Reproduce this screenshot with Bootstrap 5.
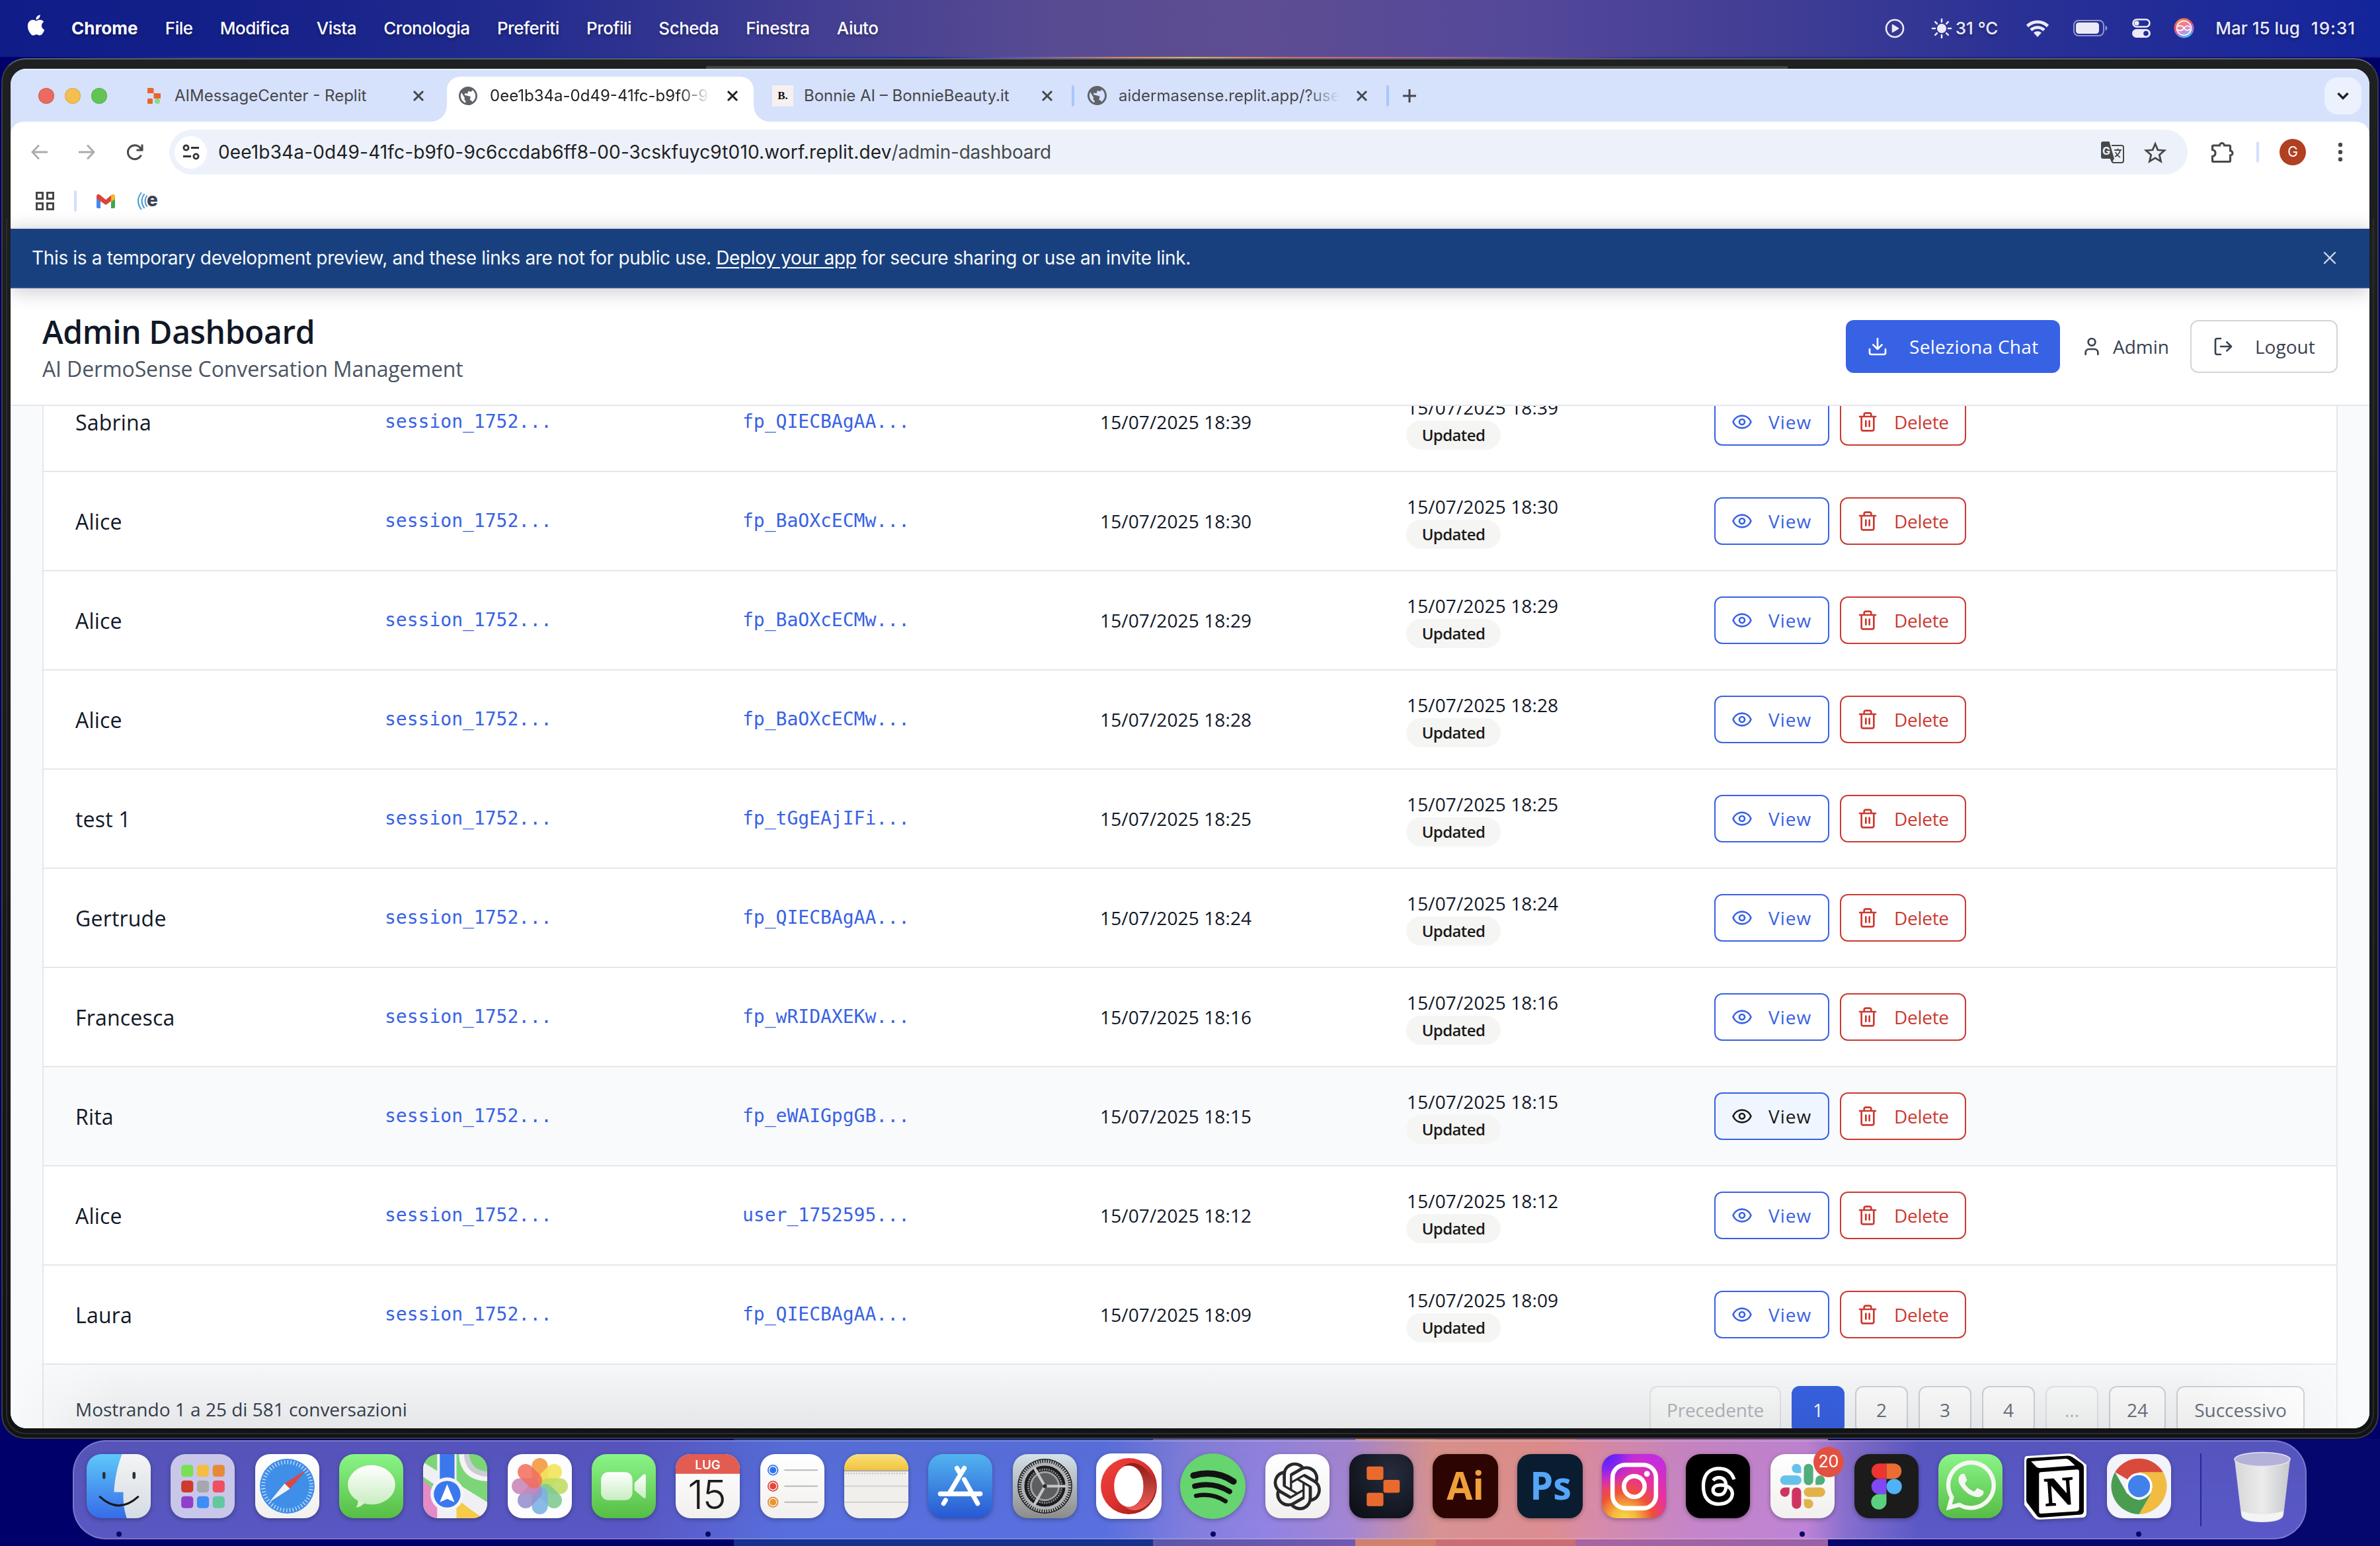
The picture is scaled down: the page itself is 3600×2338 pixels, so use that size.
<!DOCTYPE html>
<html lang="it">
<head>
<meta charset="utf-8">
<title>Admin Dashboard</title>
<link href="https://cdn.jsdelivr.net/npm/bootstrap@5.3.0/dist/css/bootstrap.min.css" rel="stylesheet">
<style>
:root{--ui:"Inter",sans-serif;--app:"Open Sans","Noto Sans",sans-serif;--line:#e5e7eb;--blue:#3862e4;--red:#cb3a31}
body{width:3600px;height:2338px;overflow:hidden;font-family:var(--ui);background:#00006a}
svg{display:block;flex:none;overflow:visible}
.st{fill:none;stroke:currentColor;stroke-width:2;stroke-linecap:round;stroke-linejoin:round}
/* menu bar */
.menubar{height:86px;padding:0 37px 11px 39px;color:#fff;font-size:26px;font-weight:500;letter-spacing:-.5px;text-shadow:0 3px 5px rgba(0,0,0,.3);background:linear-gradient(90deg,#101c88 0,#142089 350px,#232c8e 800px,#443f92 1250px,#584b92 1600px,#5e4d92 1900px,#54489a 2300px,#403d94 2700px,#2a3195 3050px,#18279a 3500px,#13259a 100%)}
.menubar .items{gap:41.3px;margin-left:38px;padding-top:10px}
.menubar .status{padding-top:10px;color:#eceaf6;letter-spacing:0}
.wallline{height:2px;background:linear-gradient(90deg,#00006a 0,#12309a 300px,#14309a 1400px,#6a58b4 1550px,#d68b5c 1700px,#d8b468 1800px,#cf6d6e 1950px,#a060a0 2200px,#2a2c90 2500px,#10107a 100%)}
/* window frame */
.frame{height:2088px;margin:0 2px;padding:14px 12px 14px;border:2px solid #3a3c3e;border-top-color:#5c6062;border-radius:36px;background:linear-gradient(#1e2022,#191a1b 50%,#121314);position:relative}
.frame .ledge{position:absolute;left:1064px;top:10px;width:1636px;height:6px;background:#444648}
.frame .rim{position:absolute;inset:240px 5px 5px 5px;border:2px solid #2a2b2c;border-top:0;border-radius:0 0 30px 30px}
.win{height:2056px;border-radius:24px;overflow:hidden;background:#fff;position:relative}
.strip{height:80px;background:#d6e1fc;border-top:2px solid #e8eefd;font-size:24px;color:#45474a}
.strip>*{transform:translateY(0)}
.lights{padding-left:42px;gap:16px;width:180px}
.lights i{width:24px;height:24px;border-radius:50%;border:1px solid rgba(0,0,0,.12)}
.tb{height:68px;margin-top:10px;padding-bottom:11px}
.tb .ttl{flex:1;white-space:nowrap;overflow:hidden}
.tb.on{background:#fff;border-radius:20px 20px 0 0;color:#1f2023;position:relative}
.tb.on:before,.tb.on:after{content:"";position:absolute;bottom:0;width:24px;height:24px}
.tb.on:before{left:-24px;background:radial-gradient(circle at 0 0,transparent 23.5px,#fff 24px)}
.tb.on:after{right:-24px;background:radial-gradient(circle at 100% 0,transparent 23.5px,#fff 24px)}
.fade-r{-webkit-mask-image:linear-gradient(90deg,#000 86%,transparent)}
.bonnie{width:32px;height:32px;background:#f6f1ef;margin-right:16px;font:700 17px "Liberation Serif",serif;color:#111}
.vsep{width:4px;height:32px;border-radius:2px;background:#a8c7fa;flex:none}
.vsep.pale{background:#d3e0fd}
.chev{width:56px;height:56px;border-radius:20px;background:#ebf2fd;color:#1f2023;margin-right:12px}
.tools{height:92px;background:#fff;border-radius:20px 20px 0 0;color:#47484a}
.under{background:#d6e1fc}
.omni{width:3053px;height:68px;border-radius:34px;background:#edf2fa;font-size:28px;padding:0 32px 0 8px;color:#1f2023}
.omni .site{width:49px;height:49px;border-radius:50%;background:#fff;margin-right:17px}
.marks{height:68px;padding:0 0 0 37px}
.marks>div{height:56px}
.ava{width:40px;height:40px;border-radius:50%;background:#b04020;color:#fff;font-size:21px}
/* preview banner */
.notice{height:92px;padding:0 51px 0 32px;background:#19407e;border-top:2px solid #dfe3e3;border-bottom:2px solid #2d5191;color:#f5f9fc;font-size:28px;letter-spacing:-.34px;box-shadow:0 4px 28px rgba(0,0,0,.22);position:relative;z-index:3}
.notice u{text-underline-offset:4px;color:#fff}
/* app */
.apphead{height:178px;padding:3px 48px 0;border-bottom:2px solid var(--line);background:#fff;font-family:var(--app);position:relative;z-index:2}
.apphead h1{font-size:48px;font-weight:650;line-height:64px;margin:0;color:#111827;letter-spacing:-.4px}
.apphead p{font-size:32px;line-height:48px;margin:0;color:#4b5563;letter-spacing:-.12px}
.apphead .acts{margin-top:-3px}
.bt{display:inline-flex;align-items:center;font-size:28px;border-radius:12px;white-space:nowrap;line-height:1}
.bt-lg{height:80px;padding:0 32px;gap:32px;font-size:28px}
.bt-sm{height:72px;padding:0 24px;gap:24px;border:2px solid;background:#fff}
.bt-view{color:var(--blue);width:174px;letter-spacing:1px}
.bt-del{color:var(--red);width:191px;border-color:var(--red);letter-spacing:-.3px}
.bt-view.hot{background:#eff6ff;color:#1a1a1a;border-color:var(--blue)}
.scroll{height:1546px;padding:0 48px;background:#f9fafb;overflow:hidden;font-family:var(--app)}
.sheet{margin-top:-50px;border:solid var(--line);border-width:0 2px;background:#fff}
.sheet table{table-layout:fixed;width:100%;margin:0;border-collapse:separate;border-spacing:0}
.sheet td{height:150px;padding:0 0 0 48px;border-bottom:2px solid var(--line);vertical-align:middle;font-size:28px;line-height:40px;letter-spacing:.12px;color:#111827}
.sheet td:nth-child(4),.sheet td:nth-child(5){padding-left:47px}
.sheet tr.hov td{background:#f9fafb}
.sheet td.who{font-size:32px;padding-top:1px;letter-spacing:.2px;font-weight:450}
.sheet td.mono{font-family:"DejaVu Sans Mono",monospace;color:var(--blue);letter-spacing:0;padding-left:47px}
.upd{display:flex;align-items:center;justify-content:center;width:143px;height:44px;border-radius:22px;background:#f5f5f4;color:#1c1917;font-size:24px;font-weight:600;margin-left:-1px;letter-spacing:-.6px}
.foot{height:140px;padding:32px 48px;background:#f9fafb;font-size:28px;color:#374151}
.foot .pg{height:72px;min-width:80px;padding:0 25px;justify-content:center;border:2px solid #d1d5db;background:#fff;color:#6b7280;line-height:1}
.foot .pg.off{border-color:#e5e7ea;background:#fcfdfc;color:#b4b8bd}
.foot .pg.cur{background:#3862e4;border-color:#3862e4;color:#fff}
.shade{position:absolute;left:0;right:0;bottom:0;height:110px;z-index:4;pointer-events:none;background:linear-gradient(transparent,rgba(20,25,30,.085));-webkit-mask-image:linear-gradient(90deg,transparent,#000 160px,#000 3300px,transparent 3540px)}
/* dock */
.desk{height:162px;padding-top:2px;background:linear-gradient(90deg,#00006a 0 1110px,#16308e 1110px 1744px,#5c57a8 1744px,#7159b2 2050px,#d0806c 2050px 2172px,#cb6d74 2172px 2383px,#a864a2 2383px,#9862a8 2765px,#05066e 2765px)}
.dock{width:3379px;height:150px;margin-left:110px;padding:19px 0 0 4px;border-radius:50px;border:2px solid rgba(255,255,255,.2);background:linear-gradient(rgba(0,0,30,.04),rgba(90,90,255,.06)),linear-gradient(90deg,#5957bd 0,#5957c2 850px,#5870dc 1080px,#5a71de 1560px,#8580dc 1690px,#9585e2 1800px,#a888d2 1930px,#df968c 2060px,#e5908c 2230px,#df8ea6 2300px,#cc88c6 2440px,#c486d4 2620px,#8a70cc 2680px,#5b59c4 2790px,#5958c4 100%)}
.app{width:127.33px;height:127px;position:relative}
.app svg{margin:0 auto;filter:drop-shadow(0 2px 3px rgba(0,0,0,.3))}
.run:after{content:"";position:absolute;left:59.5px;top:117px;width:8px;height:8px;border-radius:50%;background:#08086a}
.cnt{position:absolute;right:1px;top:-11px;width:46px;height:46px;border-radius:50%;background:#e25041;color:#fff;font-size:25px}
.split{width:2px;height:110px;margin:-1px 0 0 29px;background:#26289c}
</style>
<script src="https://cdn.jsdelivr.net/npm/bootstrap@5.3.0/dist/js/bootstrap.bundle.min.js"></script>
</head>
<body>
<svg width="0" height="0" class="position-absolute">
<defs>
<symbol id="x" viewBox="0 0 20 20"><path d="M3 3l14 14M17 3L3 17" fill="none" stroke="currentColor" stroke-width="3"/></symbol>
<symbol id="globe" viewBox="2 2 20 20"><path fill="currentColor" d="M12 2C6.48 2 2 6.48 2 12s4.48 10 10 10 10-4.48 10-10S17.52 2 12 2zm-1 17.93c-3.95-.49-7-3.85-7-7.93 0-.62.08-1.21.21-1.79L9 15v1c0 1.1.9 2 2 2v1.93zm6.9-2.54c-.26-.81-1-1.39-1.9-1.39h-1v-3c0-.55-.45-1-1-1H8v-2h2c.55 0 1-.45 1-1V7h2c1.1 0 2-.9 2-2v-.41c2.93 1.19 5 4.06 5 7.41 0 2.08-.8 3.97-2.1 5.39z" transform="rotate(14 12 12)"/></symbol>
<symbol id="eye" viewBox="0 0 24 24"><path d="M2.062 12.348a1 1 0 0 1 0-.696 10.75 10.75 0 0 1 19.876 0 1 1 0 0 1 0 .696 10.75 10.75 0 0 1-19.876 0"/><circle cx="12" cy="12" r="3"/></symbol>
<symbol id="trash" viewBox="0 0 24 24"><path d="M3 6h18M19 6v14a2 2 0 0 1-2 2H7a2 2 0 0 1-2-2V6M8 6V4a2 2 0 0 1 2-2h4a2 2 0 0 1 2 2v2M10 11v6M14 11v6"/></symbol>
<clipPath id="sq"><rect width="96" height="96" rx="22"/></clipPath>
<linearGradient id="gw" x2="0" y2="1"><stop stop-color="#fff"/><stop offset="1" stop-color="#f1f0ee"/></linearGradient>
<linearGradient id="gg" x2="0" y2="1"><stop stop-color="#8af588"/><stop offset="1" stop-color="#56bd45"/></linearGradient>
<linearGradient id="gb" x2="0" y2="1"><stop stop-color="#5ec8fa"/><stop offset="1" stop-color="#366be8"/></linearGradient>
<linearGradient id="gs" x2="0" y2="1"><stop stop-color="#52b4f0"/><stop offset="1" stop-color="#2857d2"/></linearGradient>
<linearGradient id="gf" x2="0" y2="1"><stop stop-color="#f4f4f4"/><stop offset="1" stop-color="#d4dce4"/></linearGradient>
<linearGradient id="gv" x2="0" y2="1"><stop stop-color="#fff"/><stop offset="1" stop-color="#c8edc0"/></linearGradient>
<linearGradient id="gset" x2="0" y2="1"><stop stop-color="#d4e2ea"/><stop offset="1" stop-color="#8c8c8a"/></linearGradient>
<linearGradient id="gop" x2="1" y2="1"><stop stop-color="#f2403c"/><stop offset=".5" stop-color="#dc322f"/><stop offset="1" stop-color="#8e1612"/></linearGradient>
<linearGradient id="gop2" x2="0" y2="1"><stop stop-color="#8c1c14"/><stop offset="1" stop-color="#f0605a"/></linearGradient>
<linearGradient id="gnote" x2="0" y2="1"><stop stop-color="#f8e07c"/><stop offset="1" stop-color="#f3c43c"/></linearGradient>
<radialGradient id="gig" cx=".35" cy="1.02" r="1.05"><stop stop-color="#f8d84a"/><stop offset=".18" stop-color="#f5b83c"/><stop offset=".42" stop-color="#ee5038"/><stop offset=".66" stop-color="#e830a0"/><stop offset="1" stop-color="#c42ce0"/></radialGradient>
<radialGradient id="gig2" cx=".05" cy="0" r=".55"><stop stop-color="#4a20ff"/><stop offset=".45" stop-color="#7a24f8" stop-opacity=".85"/><stop offset="1" stop-color="#c42ce0" stop-opacity="0"/></radialGradient>
<radialGradient id="grp" cx=".65" cy=".3" r=".8"><stop stop-color="#262c3e"/><stop offset="1" stop-color="#0e1118"/></radialGradient>
<linearGradient id="gt" x2="1"><stop stop-color="#d6d6d8"/><stop offset=".5" stop-color="#ececec"/><stop offset="1" stop-color="#c6c8cc"/></linearGradient>
<linearGradient id="gsi" x1=".2" x2=".6" y2="1"><stop stop-color="#f59a3a"/><stop offset=".35" stop-color="#ec5060"/><stop offset=".7" stop-color="#b070d0"/><stop offset="1" stop-color="#40c0f0"/></linearGradient>
</defs></svg>

<header class="menubar d-flex align-items-center">
<svg width="31" height="32" viewBox="0 0 16 16" fill="#fff"><path d="M11.182.008C11.148-.03 9.923.023 8.857 1.18c-1.066 1.156-.902 2.482-.878 2.516s1.52.087 2.475-1.258.762-2.391.728-2.43m3.314 11.733c-.048-.096-2.325-1.234-2.113-3.422s1.675-2.789 1.698-2.854-.597-.79-1.254-1.157a3.7 3.7 0 0 0-1.563-.434c-.108-.003-.483-.095-1.254.116-.508.139-1.653.589-1.968.607-.316.018-1.256-.522-2.267-.665-.647-.125-1.333.131-1.824.328-.49.196-1.422.754-2.074 2.237-.652 1.482-.311 3.83-.067 4.56s.625 1.924 1.273 2.796c.576.984 1.34 1.667 1.659 1.899s1.219.386 1.843.067c.502-.308 1.408-.485 1.766-.472.357.013 1.061.154 1.782.539.571.197 1.111.115 1.652-.105.541-.221 1.324-1.059 2.238-2.758q.52-1.185.473-1.282"/></svg>
<nav class="items d-flex">
<span class="fw-bold" style="letter-spacing:0">Chrome</span><span>File</span><span>Modifica</span><span>Vista</span><span>Cronologia</span><span>Preferiti</span><span>Profili</span><span>Scheda</span><span>Finestra</span><span>Aiuto</span>
</nav>
<div class="status d-flex align-items-center ms-auto">
<svg width="30" height="30" viewBox="0 0 30 30" style="margin-right:41px"><circle cx="15" cy="15" r="13" fill="none" stroke="currentColor" stroke-width="2.6"/><path d="M11.5 9.5v11l9-5.5z" fill="currentColor" stroke="currentColor" stroke-width="1.5" stroke-linejoin="round"/></svg>
<svg width="30" height="30" viewBox="0 0 30 30" style="margin-right:6px"><circle cx="15" cy="15" r="7" fill="currentColor"/><path d="M15 1v4M15 25v4M1 15h4M25 15h4M5.2 5.2l2.7 2.7M22.1 22.1l2.7 2.7M5.2 24.8l2.7-2.7M22.1 7.9l2.7-2.7" stroke="currentColor" stroke-width="2.6" stroke-linecap="round"/></svg>
<span style="margin-right:42px">31 °C</span>
<svg width="36" height="26" viewBox="0 0 36 26" style="margin-right:36px"><path d="M2.500 9.500a22 22 0 0 1 31 0M8 15.500a14.500 14.500 0 0 1 20 0" fill="none" stroke="currentColor" stroke-width="4.600"/><path d="M12 19.500a9 9 0 0 1 12 0L18 26z" fill="currentColor"/></svg>
<svg width="52" height="25" viewBox="0 0 52 25" style="margin-right:37px"><rect x="1" y="1" width="45" height="23" rx="7" fill="none" stroke="currentColor" stroke-opacity=".55" stroke-width="2"/><rect x="4" y="4" width="35" height="17" rx="4.500" fill="currentColor"/><path d="M48.500 8.500v8q3-1.500 3-4t-3-4" fill="currentColor" opacity=".55"/></svg>
<svg width="28" height="29" viewBox="0 0 28 29" style="margin-right:35px"><rect x="1.500" y="1.500" width="25" height="11" rx="5.500" fill="none" stroke="currentColor" stroke-width="2.600"/><circle cx="7" cy="7" r="3.600" fill="currentColor"/><rect y="16" width="28" height="13" rx="6.500" fill="currentColor"/><circle cx="21" cy="22.500" r="3.800" fill="#1f2c95"/></svg>
<svg width="31" height="31" viewBox="0 0 31 31" style="margin-right:32px"><circle cx="15.500" cy="15.500" r="15" fill="url(#gsi)"/><circle cx="15.500" cy="15.500" r="11" fill="rgba(255,255,255,.25)" stroke="#fff" stroke-width="1.600"/><path d="M6 13c5-3 8 0 10 3s5 4 9 1M6 18c5 3 8 0 10-3s5-4 9-1" fill="none" stroke="#fff" stroke-width="1.600"/></svg>
<span style="margin-right:17px">Mar 15 lug</span><span style="letter-spacing:1px">19:31</span>
</div>
</header>
<div class="wallline"></div>

<div class="frame">
<div class="ledge"></div><div class="rim"></div>
<div class="win d-flex flex-column">
<div class="strip d-flex align-items-center flex-shrink-0">
<div class="lights d-flex"><i style="background:#ec6a5e"></i><i style="background:#f4bf50"></i><i style="background:#61c554"></i></div>
<div class="tb d-flex align-items-center" style="width:480px;padding-left:26px;padding-right:33px">
<svg width="22" height="24" viewBox="0 0 22 24" style="margin-right:20px"><path d="M1 0h8a1.500 1.500 0 0 1 1.500 1.500V8H1zM10.500 8H20a1.500 1.500 0 0 1 1 1.500V15a1 1 0 0 1-1 1h-9.500z" fill="#e8662c"/><rect x="1" y="16" width="8" height="8" rx="1.500" fill="#e8662c"/><circle cx="16" cy="20" r="4" fill="#86dc80"/></svg>
<span class="ttl">AIMessageCenter - Replit</span><svg width="20" height="20"><use href="#x"/></svg></div>
<div class="tb on d-flex align-items-center" style="width:464px;padding-left:18px;padding-right:22px"><svg width="28" height="28" style="margin-right:19px;color:#5f6368"><use href="#globe"/></svg><span class="ttl fade-r" style="margin-right:24px">0ee1b34a-0d49-41fc-b9f0-9c6</span><svg width="20" height="20"><use href="#x"/></svg></div>
<div class="tb d-flex align-items-center" style="width:481px;padding-left:28px;padding-right:27px"><span class="bonnie d-flex align-items-center justify-content-center">B.</span><span class="ttl">Bonnie AI – BonnieBeauty.it</span><svg width="20" height="20"><use href="#x"/></svg></div>
<div class="vsep" style="margin-right:-1px"></div>
<div class="tb d-flex align-items-center" style="width:473px;padding-left:21px;padding-right:27px"><svg width="29" height="29" style="margin-right:18px;color:#5f6368"><use href="#globe"/></svg><span class="ttl fade-r" style="margin-right:25px">aidermasense.replit.app/?user</span><svg width="20" height="20"><use href="#x"/></svg></div>
<div class="vsep"></div>
<svg width="24" height="24" viewBox="0 0 24 24" style="margin-left:19px"><path d="M12 2v20M2 12h20" stroke="currentColor" stroke-width="3"/></svg>
<div class="chev d-flex align-items-center justify-content-center ms-auto"><svg width="20" height="12" viewBox="0 0 20 12"><path d="M2.500 2l7.500 7.500L17.500 2" fill="none" stroke="currentColor" stroke-width="3.400"/></svg></div>
</div>
<div class="under flex-shrink-0"><div class="tools d-flex align-items-center">
<svg width="26" height="24" viewBox="0 0 26 24" style="margin:0 45px 0 31px;color:#a9abae"><path d="M12 1.500L2 12l10 10.500M2 12h23" fill="none" stroke="currentColor" stroke-width="2.800"/></svg>
<svg width="26" height="24" viewBox="0 0 26 24" style="margin-right:47px;color:#a9abae"><path d="M14 1.500L24 12 14 22.500M24 12H1" fill="none" stroke="currentColor" stroke-width="2.800"/></svg>
<svg width="26" height="26" viewBox="0 0 26 26" style="margin-right:39px"><path d="M22.500 17.500A10.500 10.500 0 1 1 21 6.500L23.500 9M24 1.500v8.500h-8.500" fill="none" stroke="currentColor" stroke-width="3"/></svg>
<div class="omni d-flex align-items-center">
<span class="site d-flex align-items-center justify-content-center"><svg width="26" height="24" viewBox="0 0 26 24"><g fill="none" stroke="#333" stroke-width="2.800"><circle cx="5.500" cy="5.500" r="3.600"/><circle cx="20.500" cy="18.500" r="3.600"/><path d="M13 5.500h12M1 18.500h12"/></g></svg></span>
<span style="letter-spacing:.15px">0ee1b34a-0d49-41fc-b9f0-9c6ccdab6ff8-00-3cskfuyc9t010.worf.replit.dev</span><span style="color:#47494c;letter-spacing:-.22px">/admin-dashboard</span>
<svg class="ms-auto" width="35" height="33" viewBox="0 0 35 33" style="margin-right:30px;color:#47484a"><path d="M16 6h15a3 3 0 0 1 3 3v20a3 3 0 0 1-3 3H18l-3-6" fill="none" stroke="currentColor" stroke-width="2"/><path d="M3 0h9.500L20 26H3a3 3 0 0 1-3-3V3a3 3 0 0 1 3-3zM14 26h6l-4 6z" fill="currentColor"/><path d="M20 13h11M25.500 10.500V13M29 13c-1 5-4 8-8 10M22 16c1 3 4 6 7 8" fill="none" stroke="currentColor" stroke-width="1.800"/><text x="2" y="19.500" font-size="16" font-weight="700" fill="#edf2fa" font-family="Inter">G</text></svg>
<svg width="34" height="32" viewBox="0 0 34 32"><path d="M17 3.500l3.900 9.300 10 .9-7.600 6.600 2.300 9.800L17 24.900l-8.600 5.200 2.300-9.800-7.600-6.600 10-.9z" fill="none" stroke="#47484a" stroke-width="2.800"/></svg>
</div>
<svg width="36" height="34" viewBox="0 0 36 34" style="margin-left:35px"><path d="M4 7h9.500a3.500 3.500 0 0 1 7 0H28a1.500 1.500 0 0 1 1.500 1.500V15a3.500 3.500 0 0 1 0 7v8a1.500 1.500 0 0 1-1.500 1.500H4A1.500 1.500 0 0 1 2.500 30v-6.500c6-1 6-9 0-10V8.500A1.500 1.500 0 0 1 4 7z" fill="none" stroke="currentColor" stroke-width="3.200"/></svg>
<div class="vsep pale" style="margin:0 31px 0 33px"></div>
<div class="ava d-flex align-items-center justify-content-center">G</div>
<svg width="8" height="32" viewBox="0 0 8 32" style="margin-left:48px" fill="currentColor"><circle cx="4" cy="5" r="3.200"/><circle cx="4" cy="16" r="3.200"/><circle cx="4" cy="27" r="3.200"/></svg>
</div></div>
<div class="marks flex-shrink-0"><div class="d-flex align-items-center">
<svg width="30" height="28" viewBox="0 0 30 28"><g fill="none" stroke="#47484a" stroke-width="3"><rect x="2.500" y="1.500" width="9" height="9"/><rect x="18.500" y="1.500" width="9" height="9"/><rect x="2.500" y="17.500" width="9" height="9"/><rect x="18.500" y="17.500" width="9" height="9"/></g></svg>
<div class="vsep pale" style="margin:0 29px 0 29px"></div>
<svg width="30" height="23" viewBox="0 0 30 23" style="margin-right:32px"><path d="M1 4v16a2 2 0 0 0 2 2h4V9z" fill="#4a86f0"/><path d="M29 4v16a2 2 0 0 1-2 2h-4V9z" fill="#3fa652"/><path d="M1 4a3 3 0 0 1 5-2.500l9 7.500 9-7.500v9L15 17 1 7z" fill="#dc4437"/><path d="M24 1.500a3 3 0 0 1 5 2.500v4l-6 4V2.300z" fill="#f4b928"/></svg>
<svg width="33" height="28" viewBox="0 0 33 28"><path d="M7 1q-10 13 0 26M11.500 3q-8 11 0 22M15.500 5.500q-6 8.500 0 17" fill="none" stroke="#4a9ad4" stroke-width="2"/><text x="15" y="22" font-size="28" font-weight="800" fill="#3a4250" font-family="Inter">e</text></svg>
</div></div>

<div class="notice d-flex align-items-center justify-content-between flex-shrink-0"><span>This is a temporary development preview, and these links are not for public use. <u>Deploy your app</u> for secure sharing or use an invite link.</span>
<svg width="18" height="18" viewBox="0 0 18 18"><path d="M1 1l16 16M17 1L1 17" stroke="#cfd9e8" stroke-width="2.400" stroke-linecap="round"/></svg></div>

<div class="apphead d-flex align-items-center flex-shrink-0">
<div><h1>Admin Dashboard</h1><p>AI DermoSense Conversation Management</p></div>
<div class="acts d-flex align-items-center ms-auto">
<span class="bt bt-lg text-white" style="background:#3862e4;width:324px;letter-spacing:.3px"><svg class="st" width="32" height="32" viewBox="0 0 24 24"><path d="M21 15v4a2 2 0 0 1-2 2H5a2 2 0 0 1-2-2v-4M7 10l5 5 5-5M12 15V3"/></svg>Seleziona Chat</span>
<span class="bt" style="margin:0 32px;gap:16px;width:133px;color:#374151"><svg class="st" width="32" height="32" viewBox="0 0 24 24"><path d="M19 21v-2a4 4 0 0 0-4-4H9a4 4 0 0 0-4 4v2"/><circle cx="12" cy="7" r="4"/></svg>Admin</span>
<span class="bt bt-lg" style="border:2px solid #d1d5db;color:#374151;width:223px"><svg class="st" width="32" height="32" viewBox="0 0 24 24"><path d="M9 21H5a2 2 0 0 1-2-2V5a2 2 0 0 1 2-2h4M16 17l5-5-5-5M21 12H9"/></svg>Logout</span>
</div></div>

<div class="scroll flex-shrink-0"><div class="sheet">
<table><colgroup><col style="width:469px"><col style="width:541px"><col style="width:541px"><col style="width:464px"><col style="width:464px"><col></colgroup><tbody id="rows"></tbody></table>
<div class="foot d-flex justify-content-between">
<span style="line-height:70px">Mostrando 1 a 25 di 581 conversazioni</span>
<div class="d-flex" style="gap:16px"><span class="bt pg off" style="width:199px;letter-spacing:-.2px">Precedente</span><span class="bt pg cur">1</span><span class="bt pg">2</span><span class="bt pg">3</span><span class="bt pg">4</span><span class="bt pg off">...</span><span class="bt pg" style="width:86px">24</span><span class="bt pg" style="width:194px">Successivo</span></div>
</div></div></div>
<div class="shade"></div>
</div></div>

<footer class="desk"><div class="dock d-flex">
<div class="app run"><svg width="97" height="97" viewBox="0 0 96 96"><g clip-path="url(#sq)"><rect width="96" height="96" fill="url(#gb)"/><path d="M53 0C46 18 42 38 41 56q0 1 1 1h13q-1 22 5 39h36V0z" fill="url(#gf)"/></g><path d="M26 29v6M71 29v6" stroke="#26303a" stroke-width="4.500" stroke-linecap="round"/><path d="M20 64q28 26 57 0" fill="none" stroke="#15181c" stroke-width="3" stroke-linecap="round"/></svg></div>
<div class="app"><svg width="97" height="97" viewBox="0 0 96 96"><rect width="96" height="96" rx="22" fill="#c8c7ea"/><g><rect x="16" y="16" width="18" height="18" rx="4.500" fill="#78e052"/><rect x="39.500" y="16" width="18" height="18" rx="4.500" fill="#f5be42"/><rect x="63" y="16" width="18" height="18" rx="4.500" fill="#e78a38"/><rect x="16" y="39.500" width="18" height="18" rx="4.500" fill="#d03a2c"/><rect x="39.500" y="39.500" width="18" height="18" rx="4.500" fill="#a4a8ac"/><rect x="63" y="39.500" width="18" height="18" rx="4.500" fill="#ee5062"/><rect x="16" y="63" width="18" height="18" rx="4.500" fill="#9040c8"/><rect x="39.500" y="63" width="18" height="18" rx="4.500" fill="#3e8cf4"/><rect x="63" y="63" width="18" height="18" rx="4.500" fill="#62c8a0"/></g></svg></div>
<div class="app"><svg width="97" height="97" viewBox="0 0 96 96"><rect width="96" height="96" rx="22" fill="url(#gw)"/><circle cx="48" cy="48" r="41" fill="#3f8ee8"/><circle cx="48" cy="48" r="36" fill="none" stroke="#d8ecff" stroke-width="6" stroke-dasharray="1.200 3.512"/><path d="M76 24L44 44l8 8z" fill="#e0463c"/><path d="M21 72l23-28 8 8z" fill="#f2f2f2"/></svg></div>
<div class="app"><svg width="97" height="97" viewBox="0 0 96 96"><rect width="96" height="96" rx="22" fill="url(#gg)"/><ellipse cx="48.500" cy="46" rx="35.500" ry="29.500" fill="url(#gv)"/><path d="M28 68q1 7-3 12 8-1 13-7z" fill="#d6f2d0"/></svg></div>
<div class="app"><svg width="97" height="97" viewBox="0 0 96 96"><g clip-path="url(#sq)"><rect width="96" height="96" fill="#7cd678"/><path d="M0 38l24 24v34H0z" fill="#e48ac8"/><path d="M50 96V72l12-8 34 32z" fill="#f5cb48"/><path d="M0 12l96 60v24h-6L0 34z" fill="#f0f0f4"/><path d="M50 66L86 96H50z" fill="#f5cb48"/><path d="M60 0q2 34 36 34" fill="none" stroke="#f4f4f6" stroke-width="13"/><path d="M65 0q2 28 31 30" fill="none" stroke="#ccccd4" stroke-width="8"/><rect x="21" width="29" height="96" fill="#f0f0f4"/><rect x="25" width="22" height="60" fill="#3b78ee"/></g><circle cx="36" cy="60" r="25" fill="#f4f4f8"/><circle cx="36" cy="60" r="20" fill="#3b78ee"/><path d="M36 45l11 27-11-5-11 5z" fill="#fff"/></svg></div>
<div class="app"><svg width="97" height="97" viewBox="0 0 96 96"><rect width="96" height="96" rx="22" fill="#fdfdfd"/><g opacity=".88"><rect x="36" y="6" width="24" height="42" rx="12" fill="#f3983c"/><rect x="36" y="6" width="24" height="42" rx="12" fill="#f2e044" transform="rotate(45 48 48)" opacity=".9"/><rect x="36" y="6" width="24" height="42" rx="12" fill="#b8d84c" transform="rotate(90 48 48)" opacity=".9"/><rect x="36" y="6" width="24" height="42" rx="12" fill="#70c484" transform="rotate(135 48 48)" opacity=".9"/><rect x="36" y="6" width="24" height="42" rx="12" fill="#6aaae0" transform="rotate(180 48 48)" opacity=".9"/><rect x="36" y="6" width="24" height="42" rx="12" fill="#8a84c8" transform="rotate(225 48 48)" opacity=".9"/><rect x="36" y="6" width="24" height="42" rx="12" fill="#c078b0" transform="rotate(270 48 48)" opacity=".9"/><rect x="36" y="6" width="24" height="42" rx="12" fill="#f05a48" transform="rotate(315 48 48)" opacity=".85"/></g></svg></div>
<div class="app"><svg width="97" height="97" viewBox="0 0 96 96"><rect width="96" height="96" rx="22" fill="url(#gg)"/><rect x="14" y="27" width="47" height="42" rx="11" fill="url(#gv)"/><path d="M64 43l13-12q4-3 4 2v31q0 4-4 1L64 54z" fill="url(#gv)"/></svg></div>
<div class="app run"><svg width="97" height="97" viewBox="0 0 96 96"><g clip-path="url(#sq)"><rect width="96" height="96" fill="url(#gw)"/><rect width="96" height="29.500" fill="#e25c52"/></g><text x="48" y="23" text-anchor="middle" font-size="18.500" font-weight="600" fill="#fff" font-family="Inter">LUG</text><text x="47" y="82" text-anchor="middle" font-size="60" font-weight="300" fill="#1c1c1e" font-family="Inter" textLength="58">15</text></svg></div>
<div class="app"><svg width="97" height="97" viewBox="0 0 96 96"><rect width="96" height="96" rx="22" fill="url(#gw)"/><g fill="none" stroke-width="1.800"><circle cx="19" cy="24" r="7.300" stroke="#3478f0"/><circle cx="19" cy="48" r="7.300" stroke="#e04a3e"/><circle cx="19" cy="72" r="7.300" stroke="#e08e30"/></g><circle cx="19" cy="24" r="5" fill="#2e74f0"/><circle cx="19" cy="48" r="5" fill="#e8453c"/><circle cx="19" cy="72" r="5" fill="#ec9430"/><path d="M36 24h50M36 48h50M36 72h50" stroke="#b8b8bc" stroke-width="2"/></svg></div>
<div class="app"><svg width="97" height="97" viewBox="0 0 96 96"><g clip-path="url(#sq)"><rect width="96" height="96" fill="#f0efec"/><rect width="96" height="24" fill="url(#gnote)"/><rect y="24" width="96" height="2" fill="#a8a294"/><path d="M2 29h92" stroke="#c4c2bc" stroke-width="2" stroke-dasharray="2 2"/><path d="M0 48h96M0 72h96" stroke="#cfcfd2" stroke-width="2"/></g></svg></div>
<div class="app"><svg width="97" height="97" viewBox="0 0 96 96"><rect width="96" height="96" rx="22" fill="url(#gs)"/><g stroke="#fff" stroke-width="7" stroke-linecap="round"><path d="M18 59.500h60M54 21L32 58M43 21l4 7M54 38l20 36M26 69l-3 5"/></g></svg></div>
<div class="app"><svg width="97" height="97" viewBox="0 0 96 96"><rect width="96" height="96" rx="22" fill="url(#gset)"/><circle cx="48" cy="48" r="41" fill="#1c1c1e"/><circle cx="48" cy="48" r="37" fill="none" stroke="#b4b8ba" stroke-width="5" stroke-dasharray="2 1.500"/><circle cx="48" cy="48" r="33" fill="none" stroke="#b0b4b6" stroke-width="4.500"/><circle cx="48" cy="48" r="21" fill="#5c5e60" stroke="#a0a2a4" stroke-width="3"/><circle cx="48" cy="48" r="25" fill="none" stroke="#8c8e90" stroke-width="3" stroke-dasharray="2 1.500"/><path d="M48 48h32M48 48L32 20M48 48L32 76" stroke="#c4c8ca" stroke-width="4"/><circle cx="48" cy="48" r="3" fill="#2a2a2a"/></svg></div>
<div class="app"><svg width="97" height="97" viewBox="0 0 96 96"><rect x="-1" y="-1" width="98" height="98" rx="23" fill="#fff"/><path fill-rule="evenodd" d="M48 6a42 42 0 1 0 0 84 42 42 0 0 0 0-84zm0 11c12 0 22 13 22 31S60 79 48 79 26 66 26 48s10-31 22-31z" fill="url(#gop)"/><path d="M40 18a24 24 0 0 1 22-3c14 6 21 18 27 33-3 20-13 33-30 36q-10 1-18-6c14 5 29-5 29-30S55 14 40 18z" fill="url(#gop2)"/></svg></div>
<div class="app run"><svg width="97" height="97" viewBox="0 0 96 96"><circle cx="48" cy="48" r="49" fill="#66d46f"/><g fill="none" stroke="#121212" stroke-linecap="round"><path d="M19 32q33-9 60 9" stroke-width="9.500"/><path d="M21 48q28-7 52 8" stroke-width="8"/><path d="M23 62.500q24-5 44 8" stroke-width="6.500"/></g></svg></div>
<div class="app"><svg width="97" height="97" viewBox="0 0 96 96"><rect width="96" height="96" rx="22" fill="url(#gw)"/><path transform="translate(12 12.500) scale(2.980)" fill="#26282c" d="M22.2819 9.8211a5.9847 5.9847 0 0 0-.5157-4.9108 6.0462 6.0462 0 0 0-6.5098-2.9A6.0651 6.0651 0 0 0 4.9807 4.1818a5.9847 5.9847 0 0 0-3.9977 2.9 6.0462 6.0462 0 0 0 .7427 7.0966 5.98 5.98 0 0 0 .511 4.9107 6.051 6.051 0 0 0 6.5146 2.9001A5.9847 5.9847 0 0 0 13.2599 24a6.0557 6.0557 0 0 0 5.7718-4.2058 5.9894 5.9894 0 0 0 3.9977-2.9001 6.0557 6.0557 0 0 0-.7475-7.0729zm-9.022 12.6081a4.4755 4.4755 0 0 1-2.8764-1.0408l.1419-.0804 4.7783-2.7582a.7948.7948 0 0 0 .3927-.6813v-6.7369l2.02 1.1686a.071.071 0 0 1 .038.052v5.5826a4.504 4.504 0 0 1-4.4945 4.4944zm-9.6607-4.1254a4.4708 4.4708 0 0 1-.5346-3.0137l.142.0852 4.783 2.7582a.7712.7712 0 0 0 .7806 0l5.8428-3.3685v2.3324a.0804.0804 0 0 1-.0332.0615L9.74 19.9502a4.4992 4.4992 0 0 1-6.1408-1.6464zM2.3408 7.8956a4.485 4.485 0 0 1 2.3655-1.9728V11.6a.7664.7664 0 0 0 .3879.6765l5.8144 3.3543-2.0201 1.1685a.0757.0757 0 0 1-.071 0l-4.8303-2.7865A4.504 4.504 0 0 1 2.3408 7.872zm16.5963 3.8558L13.1038 8.364 15.1192 7.2a.0757.0757 0 0 1 .071 0l4.8303 2.7913a4.4944 4.4944 0 0 1-.6765 8.1042v-5.6772a.79.79 0 0 0-.407-.667zm2.0107-3.0231l-.142-.0852-4.7735-2.7818a.7759.7759 0 0 0-.7854 0L9.409 9.2297V6.8974a.0662.0662 0 0 1 .0284-.0615l4.8303-2.7866a4.4992 4.4992 0 0 1 6.6802 4.66zM8.3065 12.863l-2.02-1.1638a.0804.0804 0 0 1-.038-.0567V6.0742a4.4992 4.4992 0 0 1 7.3757-3.4537l-.142.0805L8.704 5.459a.7948.7948 0 0 0-.3927.6813zm1.0976-2.3654l2.602-1.4998 2.6069 1.4998v2.9994l-2.5974 1.4997-2.6067-1.4997Z"/></svg></div>
<div class="app"><svg width="97" height="97" viewBox="0 0 96 96"><rect width="96" height="96" rx="22" fill="url(#grp)"/><rect x="26" y="18.500" width="25" height="20" rx="3" fill="#ea6a2e"/><rect x="51" y="38.500" width="24.500" height="19.500" rx="3" fill="#ea6a2e"/><rect x="26" y="58" width="25" height="20" rx="3" fill="#ea6a2e"/></svg></div>
<div class="app"><svg width="97" height="97" viewBox="0 0 96 96"><rect x="-1" width="98" height="96" rx="20" fill="#2c0502"/><text x="48" y="68" text-anchor="middle" font-size="59" font-weight="700" fill="#f0a03a" font-family="Open Sans" textLength="56" lengthAdjust="spacingAndGlyphs">Ai</text></svg></div>
<div class="app"><svg width="97" height="97" viewBox="0 0 96 96"><rect x="-1" width="98" height="96" rx="20" fill="#091c30"/><text x="49" y="68" text-anchor="middle" font-size="59" font-weight="700" fill="#55a5f8" font-family="Open Sans" textLength="62" lengthAdjust="spacingAndGlyphs">Ps</text></svg></div>
<div class="app"><svg width="97" height="97" viewBox="0 0 96 96"><rect width="96" height="96" rx="22" fill="url(#gig)"/><rect width="96" height="96" rx="22" fill="url(#gig2)"/><g fill="none" stroke="#fff" stroke-width="6.500"><rect x="16" y="16" width="65" height="65" rx="19"/><circle cx="48.500" cy="48.500" r="15.500"/></g><circle cx="67.500" cy="29.500" r="4.300" fill="#fff"/></svg></div>
<div class="app"><svg width="97" height="97" viewBox="0 0 96 96"><rect width="96" height="96" rx="22" fill="#000"/><path transform="translate(20 19) scale(3.650)" fill="#fff" d="M6.321 6.016c-.27-.18-1.166-.802-1.166-.802.756-1.081 1.753-1.502 3.132-1.502.975 0 1.803.327 2.394.948s.928 1.509 1.005 2.644q.492.207.905.484c1.109.745 1.719 1.860 1.719 3.137 0 2.716-2.226 5.075-6.256 5.075C4.594 16 1 13.987 1 7.994 1 2.034 4.482 0 8.044 0 9.690 0 13.550.243 15 5.036l-1.360.353C12.516 1.974 10.163 1.430 8.006 1.430c-3.565 0-5.582 2.171-5.582 6.790 0 4.143 2.254 6.343 5.630 6.343 2.777 0 4.847-1.443 4.847-3.556 0-1.438-1.208-2.127-1.270-2.127-.236 1.234-.868 3.310-3.644 3.310-1.618 0-3.013-1.118-3.013-2.582 0-2.090 1.984-2.847 3.550-2.847.586 0 1.294.040 1.663.114 0-.637-.540-1.728-1.900-1.728-1.250 0-1.566.405-1.967.868ZM8.716 8.190c-2.040 0-2.304.870-2.304 1.416 0 .878 1.043 1.168 1.600 1.168 1.020 0 2.067-.282 2.232-2.423a6.200 6.200 0 0 0-1.528-.161"/></svg></div>
<div class="app run"><svg width="97" height="97" viewBox="0 0 96 96"><rect width="96" height="96" rx="22" fill="url(#gw)"/><g fill="#66c2ea"><path d="M46 28.500h-7a7 7 0 1 1 7-7z"/><rect x="14.500" y="32" width="32" height="14" rx="7"/></g><g fill="#4fae7c"><rect x="50" y="14.500" width="14" height="32" rx="7"/><path d="M67.500 46v-7a7 7 0 1 1 7 7z"/></g><g fill="#cf3460"><path d="M28.500 50v7a7 7 0 1 1-7-7z"/><rect x="32" y="50" width="14" height="32" rx="7"/></g><g fill="#e2b24a"><rect x="50" y="50" width="32" height="14" rx="7"/><path d="M50 67.500h7a7 7 0 1 1-7 7z"/></g></svg><span class="cnt d-flex align-items-center justify-content-center">20</span></div>
<div class="app"><svg width="97" height="97" viewBox="0 0 96 96"><rect width="96" height="96" rx="22" fill="#1b1b1c"/><path d="M48 14H37a11.500 11.500 0 0 0 0 23h11z" fill="#eb3530"/><path d="M48 14h11a11.500 11.500 0 0 1 0 23H48z" fill="#ec6c34"/><path d="M48 37H37a11.500 11.500 0 0 0 0 23h11z" fill="#8048f4"/><circle cx="59.500" cy="48.500" r="11.500" fill="#50b2f6"/><path d="M48 60H37a11.500 11.500 0 1 0 11 11.500z" fill="#5cd07e"/></svg></div>
<div class="app"><svg width="97" height="97" viewBox="0 0 96 96"><rect width="96" height="96" rx="22" fill="url(#gg)"/><path transform="translate(11.500 9.500) scale(4.680)" fill="#f6f6f4" d="M13.601 2.326A7.850 7.850 0 0 0 7.994 0C3.627 0 .068 3.558.064 7.926c0 1.399.366 2.760 1.057 3.965L0 16l4.204-1.102a7.900 7.900 0 0 0 3.790.965h.004c4.368 0 7.926-3.558 7.930-7.930A7.900 7.900 0 0 0 13.600 2.326zM7.994 14.521a6.600 6.600 0 0 1-3.356-.920l-.240-.144-2.494.654.666-2.433-.156-.251a6.560 6.560 0 0 1-1.007-3.505c0-3.626 2.957-6.584 6.591-6.584a6.560 6.560 0 0 1 4.660 1.931 6.560 6.560 0 0 1 1.928 4.660c-.004 3.639-2.961 6.592-6.592 6.592m3.615-4.934c-.197-.099-1.170-.578-1.353-.646-.182-.065-.315-.099-.445.099-.133.197-.513.646-.627.775-.114.133-.232.148-.430.050-.197-.100-.836-.308-1.592-.985-.590-.525-.985-1.175-1.103-1.372-.114-.198-.011-.304.088-.403.087-.088.197-.232.296-.346.100-.114.133-.198.198-.330.065-.134.034-.248-.015-.347-.050-.099-.445-1.076-.612-1.470-.160-.389-.323-.335-.445-.340-.114-.007-.247-.007-.380-.007a.730.730 0 0 0-.529.247c-.182.198-.691.677-.691 1.654s.710 1.916.810 2.049c.098.133 1.394 2.132 3.383 2.992.470.205.840.326 1.129.418.475.152.904.129 1.246.080.380-.058 1.171-.480 1.338-.943.164-.464.164-.860.114-.943-.049-.084-.182-.133-.380-.232"/></svg></div>
<div class="app"><svg width="97" height="97" viewBox="0 0 96 96"><path d="M5 3L69-1l7 2 19 15v72q0 7-7 7l-64 3q-5 0-8-4L2 76V9q0-5 3-6z" fill="#fff"/><path d="M9 6l58-3.500q4 0 7 2L88 14q3 2 3 6v65q0 5-5 5.500L27 95q-5 0-7-4L7 74q-2-2-2-5V11q0-5 4-5z" fill="#000"/><path d="M12 11l52-4q3 0 5 2l9 8-52 4q-4 0-6-2z" fill="#fff"/><path d="M27 27l54-4q3 0 3 3v56q0 3-3 3.500L27 89q-3 0-3-3V30q0-3 3-3z" fill="#fff"/><text x="54" y="76" text-anchor="middle" transform="rotate(-4 54 56)" font-size="60" font-weight="700" font-family="Liberation Serif" fill="#000" stroke="#000" stroke-width="1.500">N</text></svg></div>
<div class="app run"><svg width="97" height="97" viewBox="0 0 96 96"><rect width="96" height="96" rx="22" fill="#f2f3fb"/><path d="M48 48L12 27a42 42 0 0 1 72 0z" fill="#d84a3c"/><path d="M84 27H48v21l18 11-18 31a42 42 0 0 0 36-63z" fill="#f2bc42"/><path d="M12 27l18 32 18 10 18-10-18 31A42 42 0 0 1 12 27z" fill="#4a9c50"/><circle cx="48" cy="48" r="20" fill="#fff"/><circle cx="48" cy="48" r="16.500" fill="#4280ea"/></svg></div>
<div class="split"></div>
<svg width="86" height="108" viewBox="0 0 86 108" style="margin:-4px 0 0 49px"><path d="M1 12l10 84q2 11 32 11t32-11l10-84z" fill="url(#gt)"/><path d="M11 90q32 10 64 0l-1 7q-4 9-31 9T12 97z" fill="#f4f4f4"/><ellipse cx="43" cy="12" rx="42" ry="10.500" fill="#b4b2d8" stroke="#e4e4ee" stroke-width="1.500"/></svg>
</div></footer>
<script>
const list=[["Sabrina","fp_QIECBAgAA...","18:39"],["Alice","fp_BaOXcECMw...","18:30"],["Alice","fp_BaOXcECMw...","18:29"],["Alice","fp_BaOXcECMw...","18:28"],["test 1","fp_tGgEAjIFi...","18:25"],["Gertrude","fp_QIECBAgAA...","18:24"],["Francesca","fp_wRIDAXEKw...","18:16"],["Rita","fp_eWAIGpgGB...","18:15"],["Alice","user_1752595...","18:12"],["Laura","fp_QIECBAgAA...","18:09"]];
document.getElementById("rows").innerHTML=list.map(([n,f,t])=>{
  const h=n==="Rita";
  return `<tr class="${h?"hov":""}"><td class="who">${n}</td><td class="mono">session_1752...</td><td class="mono">${f}</td><td>15/07/2025 ${t}</td><td>15/07/2025 ${t}<span class="upd">Updated</span></td><td><div class="d-flex gap-3"><span class="bt bt-sm bt-view ${h?"hot":""}"><svg class="st" width="32" height="32"><use href="#eye"/></svg>View</span><span class="bt bt-sm bt-del"><svg class="st" width="32" height="32"><use href="#trash"/></svg>Delete</span></div></td></tr>`}).join("");
</script>
</body>
</html>
